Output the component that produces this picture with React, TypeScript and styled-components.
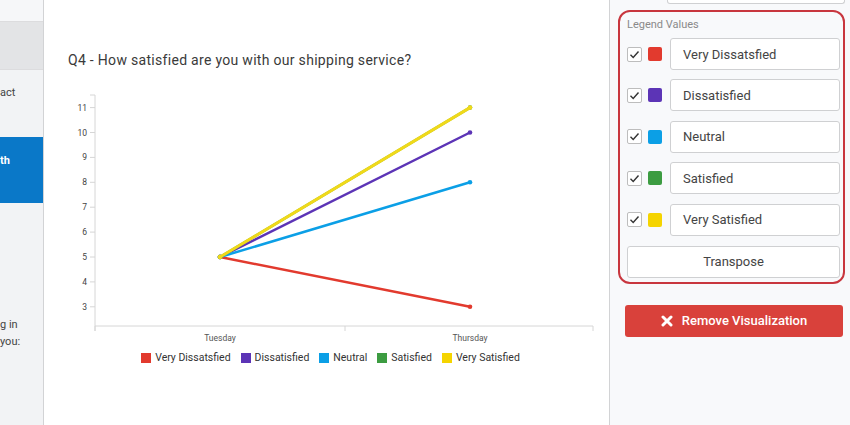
import React from "react";
import styled, { createGlobalStyle } from "styled-components";

const GlobalStyle = createGlobalStyle`
  html, body { margin: 0; padding: 0; }
  body {
    font-family: Roboto, "Liberation Sans", Arial, sans-serif;
    color: #3b3b3b;
    background: #ffffff;
  }
  * { box-sizing: border-box; }
`;

const Page = styled.div`
  display: flex;
  width: 850px;
  height: 425px;
  overflow: hidden;
`;

const Sidebar = styled.div`
  width: 44px;
  flex-shrink: 0;
  background: #f2f3f5;
  border-right: 1px solid #d2d3d5;
  display: flex;
  flex-direction: column;
  overflow: hidden;
`;

const SideTop = styled.div`
  height: 22px;
  background: #f6f7f9;
  border-bottom: 1px solid #dcdcde;
`;

const SideBand = styled.div`
  height: 48px;
  background: #e3e4e6;
  border-bottom: 1px solid #dcdcde;
`;

const SideText = styled.div<{ $top: number }>`
  margin-top: ${(p) => p.$top}px;
  font-size: 11px;
  line-height: 17px;
  color: #444;
  white-space: nowrap;
`;

const SideActive = styled.div`
  margin-top: 36px;
  height: 66px;
  background: #0a78c8;
  color: #ffffff;
  font-weight: 700;
  font-size: 11px;
  line-height: 17px;
  padding-top: 15px;
`;

const Main = styled.div`
  width: 566px;
  flex-shrink: 0;
  background: #ffffff;
  border-right: 1px solid #d2d3d5;
  display: flex;
  flex-direction: column;
`;

const Title = styled.h2`
  margin: 51px 0 0 24px;
  font-size: 14px;
  font-weight: 400;
  letter-spacing: 0.3px;
  line-height: 18px;
  color: #3a3a3a;
`;

const ChartSvg = styled.svg`
  display: block;
  margin: 16px 0 0 16px;
`;

const Legend = styled.div`
  display: flex;
  justify-content: center;
  gap: 10px;
  margin: 4px 0 0 8px;
  font-size: 10.5px;
  color: #333;
`;

const LegendItem = styled.div`
  display: flex;
  align-items: center;
  gap: 4px;
`;

const Swatch = styled.span<{ $c: string; $s: number; $r: number }>`
  display: inline-block;
  width: ${(p) => p.$s}px;
  height: ${(p) => p.$s}px;
  border-radius: ${(p) => p.$r}px;
  background: ${(p) => p.$c};
  flex-shrink: 0;
`;

const Panel = styled.div`
  flex: 1;
  background: #f8f9fb;
  display: flex;
  flex-direction: column;
  padding: 0 7px 0 8px;
`;

const PrevField = styled.div`
  margin-left: 49px;
  width: 178px;
  height: 4px;
  background: #fff;
  border: 1px solid #cfd0d2;
  border-top: none;
  border-radius: 0 0 3px 3px;
`;

const LegendBox = styled.div`
  margin-top: 6px;
  border: 2px solid #c8363e;
  border-radius: 12px;
  padding: 6px 3px 4px 7px;
  display: flex;
  flex-direction: column;
  gap: 9.4px;
`;

const BoxLabel = styled.div`
  font-size: 11px;
  line-height: 14px;
  color: #8a8a8a;
  margin-bottom: -3.4px;
`;

const Row = styled.div`
  display: flex;
  align-items: center;
`;

const Check = styled.span`
  width: 15px;
  height: 15px;
  border: 1px solid #bdbdbd;
  background: #fff;
  border-radius: 2px;
  display: flex;
  align-items: center;
  justify-content: center;
  margin-right: 6px;
`;

const Field = styled.div`
  margin-left: 8px;
  flex: 1;
  height: 32px;
  background: #fff;
  border: 1px solid #cfd0d2;
  border-radius: 3px;
  display: flex;
  align-items: center;
  padding-left: 12px;
  font-size: 13px;
  color: #444;
`;

const Button = styled.div`
  height: 32px;
  background: #fff;
  border: 1px solid #cfd0d2;
  border-radius: 3px;
  display: flex;
  align-items: center;
  justify-content: center;
  font-size: 13px;
  color: #444;
  margin-top: 1px;
`;

const RemoveButton = styled.div`
  margin: 21px 2px 0 7px;
  height: 32px;
  background: #d9413b;
  border-radius: 3px;
  display: flex;
  align-items: center;
  justify-content: center;
  gap: 9px;
  color: #fff;
  font-weight: 500;
  font-size: 13px;
`;

const series = [
  { name: "Very Dissatsfied", color: "#e23a2e", end: 3 },
  { name: "Dissatisfied", color: "#5c34b6", end: 10 },
  { name: "Neutral", color: "#0b9fe6", end: 8 },
  { name: "Satisfied", color: "#3c9c41", end: 11 },
  { name: "Very Satisfied", color: "#f0d91a", end: 11 },
];

const legendColors = ["#e23a2e", "#5c34b6", "#0b9fe6", "#3c9c41", "#f5d400"];

// chart coordinates: svg origin at page (60, 85)
const X0 = 35;
const yOf = (v: number) => 172 - (v - 5) * 24.9;

function Chart() {
  const ticks = [3, 4, 5, 6, 7, 8, 9, 10, 11];
  return (
    <ChartSvg width={540} height={262} viewBox="0 0 540 262">
      <line x1={X0} y1={10} x2={X0} y2={246} stroke="#d6d6d6" strokeWidth={1} />
      <line x1={30} y1={10} x2={X0} y2={10} stroke="#d6d6d6" strokeWidth={1} />
      <line x1={X0} y1={241} x2={533} y2={241} stroke="#d6d6d6" strokeWidth={1} />
      {[X0, 285, 533].map((x) => (
        <line key={x} x1={x} y1={241} x2={x} y2={246} stroke="#d6d6d6" strokeWidth={1} />
      ))}
      {ticks.map((t) => (
        <g key={t}>
          <line x1={30} y1={yOf(t)} x2={X0} y2={yOf(t)} stroke="#d6d6d6" strokeWidth={1} />
          <text
            x={27}
            y={yOf(t) + 3}
            textAnchor="end"
            fontSize={8.5}
            fill="#444"
            fontFamily="Roboto, Arial, sans-serif"
          >
            {t}
          </text>
        </g>
      ))}
      <text x={160} y={256} textAnchor="middle" fontSize={8.5} fill="#555" fontFamily="Roboto, Arial, sans-serif">
        Tuesday
      </text>
      <text x={410} y={256} textAnchor="middle" fontSize={8.5} fill="#555" fontFamily="Roboto, Arial, sans-serif">
        Thursday
      </text>
      {series.map((s) => (
        <g key={s.name}>
          <line
            x1={160}
            y1={yOf(5)}
            x2={410}
            y2={yOf(s.end)}
            stroke={s.color}
            strokeWidth={s.name === "Very Satisfied" ? 3 : 2.5}
            strokeLinecap="round"
          />
          <circle cx={410} cy={yOf(s.end)} r={2.3} fill={s.color} />
          <circle cx={160} cy={yOf(5)} r={2.3} fill={s.color} />
        </g>
      ))}
    </ChartSvg>
  );
}

function CheckMark() {
  return (
    <svg width="11" height="11" viewBox="0 0 11 11">
      <path d="M1.5 5.8 L4.2 8.4 L9.5 2.5" fill="none" stroke="#333" strokeWidth="1.4" />
    </svg>
  );
}

export default function App() {
  return (
    <>
      <GlobalStyle />
      <Page>
        <Sidebar>
          <SideTop />
          <SideBand />
          <SideText $top={14}>act</SideText>
          <SideActive>th</SideActive>
          <SideText $top={113}>g in</SideText>
          <SideText $top={0}>you:</SideText>
        </Sidebar>
        <Main>
          <Title>Q4 - How satisfied are you with our shipping service?</Title>
          <Chart />
          <Legend>
            {series.map((s, i) => (
              <LegendItem key={s.name}>
                <Swatch $c={legendColors[i]} $s={10} $r={0} />
                {s.name}
              </LegendItem>
            ))}
          </Legend>
        </Main>
        <Panel>
          <PrevField />
          <LegendBox>
            <BoxLabel>Legend Values</BoxLabel>
            {series.map((s, i) => (
              <Row key={s.name}>
                <Check>
                  <CheckMark />
                </Check>
                <Swatch $c={legendColors[i]} $s={14} $r={2} />
                <Field>{s.name}</Field>
              </Row>
            ))}
            <Button>Transpose</Button>
          </LegendBox>
          <RemoveButton>
            <svg width="12" height="12" viewBox="0 0 12 12">
              <path d="M2 2 L10 10 M10 2 L2 10" stroke="#fff" strokeWidth="3" strokeLinecap="round" />
            </svg>
            Remove Visualization
          </RemoveButton>
        </Panel>
      </Page>
    </>
  );
}
